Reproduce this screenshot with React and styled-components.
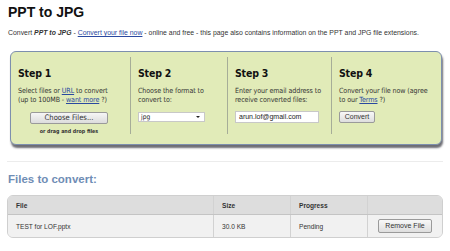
import React from 'react';
import styled, { createGlobalStyle } from 'styled-components';

const GlobalStyle = createGlobalStyle`
    body {
        margin: 0;
        background: #ffffff;
        font-family: "Liberation Sans", Arial, sans-serif;
        color: #222;
    }
`;

const Page = styled.div`
    width: 450px;
    padding: 0 7px 0 7px;
    box-sizing: border-box;
`;

const Title = styled.h1`
    margin: 0;
    padding: 4px 0 0 1px;
    font-size: 14px;
    line-height: 16px;
    font-weight: bold;
    color: #111;
`;

const Intro = styled.p`
    margin: 8px 0 0 1px;
    font-size: 6.9px;
    line-height: 9px;
    color: #333;
    white-space: nowrap;
    a {
        color: #2a49a0;
    }
`;

const StepsBox = styled.div`
    margin: 14px 1px 0 3px;
    height: 94px;
    box-sizing: border-box;
    background: #e1ebb8;
    border: 1px solid #7d8fae;
    border-radius: 6px;
    box-shadow: 1px 3px 2px rgba(60, 60, 70, 0.75);
    padding: 5px 0 10px 0;
    display: grid;
    grid-template-columns: 119px 97px 104px 1fr;
    font-family: Tahoma, "DejaVu Sans Condensed", "DejaVu Sans", sans-serif;
`;

const Step = styled.div`
    padding: 10px 0 0 7px;
    border-left: ${(props) => (props.first ? 'none' : '1px solid #a6ad98')};
    display: flex;
    flex-direction: column;
`;

const StepTitle = styled.div`
    font-size: 10.5px;
    font-weight: bold;
    line-height: 12px;
    color: #111;
    letter-spacing: -0.2px;
`;

const StepText = styled.div`
    margin-top: 7px;
    font-size: 7.1px;
    line-height: 9px;
    color: #333;
    letter-spacing: -0.1px;
    white-space: nowrap;
    a {
        color: #2a49a0;
    }
`;

const ChooseButton = styled.div`
    margin: 8px 0 0 12px;
    width: 78px;
    height: 12px;
    box-sizing: border-box;
    border: 1px solid #9a9a9a;
    border-radius: 2px;
    background: linear-gradient(#f6f6f6, #dcdcdc);
    font-size: 7.6px;
    line-height: 10px;
    text-align: center;
    color: #333;
`;

const DropHint = styled.div`
    margin: 4px 0 0 12px;
    width: 78px;
    text-align: center;
    font-size: 5.3px;
    font-weight: bold;
    color: #333;
`;

const SelectBox = styled.div`
    margin-top: 8px;
    width: 67px;
    height: 10px;
    box-sizing: border-box;
    background: #fff;
    border: 1px solid #c8c8c8;
    display: flex;
    align-items: center;
    justify-content: space-between;
    padding: 0 4px 0 2px;
    font-size: 6.6px;
    color: #222;
`;

const Caret = styled.span`
    width: 0;
    height: 0;
    border-left: 2px solid transparent;
    border-right: 2px solid transparent;
    border-top: 2px solid #222;
`;

const EmailInput = styled.div`
    margin-top: 7px;
    width: 84px;
    height: 12px;
    box-sizing: border-box;
    background: #fff;
    border: 1px solid #c8c8c8;
    padding: 0 0 0 3px;
    font-family: "Liberation Sans", Arial, sans-serif;
    font-size: 7px;
    line-height: 10px;
    color: #222;
`;

const SmallButton = styled.div`
    margin-top: ${(props) => props.top || 0}px;
    width: ${(props) => props.w}px;
    height: ${(props) => props.h || 12}px;
    box-sizing: border-box;
    border: 1px solid #9a9a9a;
    border-radius: 2px;
    background: linear-gradient(#f8f8f8, #dedede);
    font-family: "Liberation Sans", Arial, sans-serif;
    font-size: 7px;
    line-height: ${(props) => (props.h || 12) - 2}px;
    text-align: center;
    color: #333;
`;

const Rule = styled.div`
    margin: 16px 0 0 0;
    height: 1px;
    background: #ececec;
`;

const SectionTitle = styled.h2`
    margin: 10px 0 0 1px;
    font-size: 11.5px;
    line-height: 14px;
    font-weight: bold;
    color: #6f8db5;
`;

const Table = styled.div`
    margin: 9px 0 0 0;
    border: 1px solid #cfcfcf;
    border-radius: 6px;
    overflow: hidden;
    background: #f1f1f1;
`;

const Row = styled.div`
    display: grid;
    grid-template-columns: 205px 77px 77px 1fr;
    height: ${(props) => (props.head ? 18 : 22)}px;
    background: ${(props) => (props.head ? '#dddddd' : '#f1f1f1')};
    border-bottom: ${(props) => (props.head ? '1px solid #c4c4c4' : 'none')};
`;

const Cell = styled.div`
    display: flex;
    align-items: center;
    justify-content: ${(props) => (props.right ? 'flex-end' : 'flex-start')};
    padding: 0 ${(props) => (props.right ? 10 : 0)}px 0 ${(props) => (props.right ? 0 : 8)}px;
    border-left: ${(props) => (props.first ? 'none' : '1px solid #d2d2d2')};
    font-size: 6.6px;
    font-weight: ${(props) => (props.head ? 'bold' : 'normal')};
    color: #333;
`;

const App = () => {
    return (
        <Page>
            <GlobalStyle />
            <Title>PPT to JPG</Title>
            <Intro>
                Convert <b><i>PPT to JPG</i></b> - <a href="#">Convert your file now</a> - online and free - this page also contains information on the PPT and JPG file extensions.
            </Intro>

            <StepsBox>
                <Step first>
                    <StepTitle>Step 1</StepTitle>
                    <StepText>
                        Select files or <a href="#">URL</a> to convert<br />
                        (up to 100MB - <a href="#">want more</a> ?)
                    </StepText>
                    <ChooseButton>Choose Files...</ChooseButton>
                    <DropHint>or drag and drop files</DropHint>
                </Step>
                <Step>
                    <StepTitle>Step 2</StepTitle>
                    <StepText>
                        Choose the format to<br />convert to:
                    </StepText>
                    <SelectBox>
                        jpg
                        <Caret />
                    </SelectBox>
                </Step>
                <Step>
                    <StepTitle>Step 3</StepTitle>
                    <StepText>
                        Enter your email address to<br />receive converted files:
                    </StepText>
                    <EmailInput>arun.lof@gmail.com</EmailInput>
                </Step>
                <Step>
                    <StepTitle>Step 4</StepTitle>
                    <StepText>
                        Convert your file now (agree<br />to our <a href="#">Terms</a> ?)
                    </StepText>
                    <SmallButton top={7} w={36}>Convert</SmallButton>
                </Step>
            </StepsBox>

            <Rule />
            <SectionTitle>Files to convert:</SectionTitle>

            <Table>
                <Row head>
                    <Cell first head>File</Cell>
                    <Cell head>Size</Cell>
                    <Cell head>Progress</Cell>
                    <Cell />
                </Row>
                <Row>
                    <Cell first>TEST for LOF.pptx</Cell>
                    <Cell>30.0 KB</Cell>
                    <Cell>Pending</Cell>
                    <Cell right>
                        <SmallButton w={54} h={14}>Remove File</SmallButton>
                    </Cell>
                </Row>
            </Table>
        </Page>
    );
};

export default App;
